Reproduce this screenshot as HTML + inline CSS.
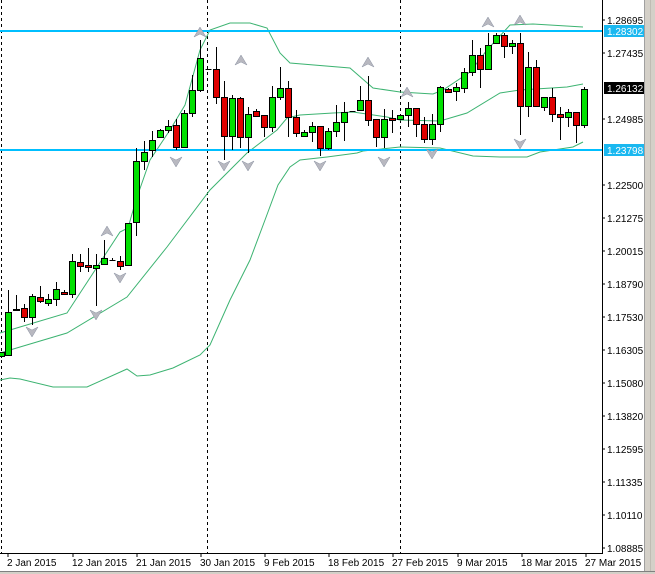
<!DOCTYPE html>
<html><head><style>
html,body{margin:0;padding:0;background:#fff;}
svg{display:block;font-family:"Liberation Sans",sans-serif;}
</style></head><body>
<svg width="655" height="574" viewBox="0 0 655 574" xmlns="http://www.w3.org/2000/svg">
<rect width="655" height="574" fill="#fff"/>
<!-- right strip -->
<rect x="644" y="0" width="11" height="574" fill="#d4d0c8"/>
<line x1="644.5" y1="0" x2="644.5" y2="574" stroke="#a0a0a0"/>
<line x1="650.5" y1="0" x2="650.5" y2="574" stroke="#c0bcb4"/>
<rect x="0" y="571" width="655" height="3" fill="#d4d0c8"/>
<line x1="0" y1="571.5" x2="655" y2="571.5" stroke="#808080"/>
<!-- dashed verticals -->
<g stroke="#000" stroke-dasharray="3,3" stroke-width="1">
<line x1="1.5" y1="0" x2="1.5" y2="553"/>
<line x1="207.5" y1="0" x2="207.5" y2="553"/>
<line x1="400.5" y1="0" x2="400.5" y2="553"/>
</g>
<!-- bands -->
<g fill="none" stroke="#3cb371" stroke-width="1">
<polyline points="0,333 20,327 67,313 120,232 128,228 136,200 150,160 170,130 185,105 200,50 210,30 230,23 250,23 267,28 280,53 290,63 350,68 373,88 400,92 433,94 443,90 470,72 487,50 510,25 533,24 583,27"/>
<polyline points="0,353 20,347 67,333 127,297 167,247 210,190 233,167 247,153 277,130 287,118 300,115 333,113 353,112 387,117 400,120 440,121 467,113 500,93 520,90 567,87 583,84"/>
<polyline points="0,380 10,378 20,379 53,387 87,387 127,369 137,376 150,375 173,368 200,355 210,345 230,300 250,260 265,220 278,185 290,167 300,160 327,157 357,153 363,151 400,147 440,148 473,156 500,157 527,157 540,152 573,147 583,142"/>
</g>
<!-- horizontal lines -->
<line x1="0" y1="31" x2="602" y2="31" stroke="#00bfff" stroke-width="2"/>
<line x1="0" y1="150" x2="602" y2="150" stroke="#00bfff" stroke-width="2"/>
<!-- candles -->
<g id="c" stroke="#000" stroke-width="1"></g>
<!-- fractals -->
<g fill="#b8b8c0" stroke="#8890a0" stroke-width="0.5">
<path d="M101,236 L107,226 L113,236 L107,233 Z"/>
<path d="M194,37 L200,27 L206,37 L200,34 Z"/>
<path d="M235,65 L241,55 L247,65 L241,62 Z"/>
<path d="M362,67 L368,57 L374,67 L368,64 Z"/>
<path d="M401,97 L407,87 L413,97 L407,94 Z"/>
<path d="M482,27 L488,17 L494,27 L488,24 Z"/>
<path d="M514,25 L520,15 L526,25 L520,22 Z"/>
<path d="M26,327 L32,330 L38,327 L32,337 Z"/>
<path d="M90,310 L96,313 L102,310 L96,320 Z"/>
<path d="M114,273 L120,276 L126,273 L120,283 Z"/>
<path d="M170,157 L176,160 L182,157 L176,167 Z"/>
<path d="M218,161 L224,164 L230,161 L224,171 Z"/>
<path d="M242,161 L248,164 L254,161 L248,171 Z"/>
<path d="M314,161 L320,164 L326,161 L320,171 Z"/>
<path d="M378,157 L384,160 L390,157 L384,167 Z"/>
<path d="M426,149 L432,152 L438,149 L432,159 Z"/>
<path d="M514,139 L520,142 L526,139 L520,149 Z"/>
</g>
<!-- axis -->
<line x1="602.5" y1="0" x2="602.5" y2="553" stroke="#000"/>
<line x1="0" y1="553.5" x2="603" y2="553.5" stroke="#000"/>
<g font-size="10" fill="#000">
<text x="607" y="24">1.28695</text>
<text x="607" y="57">1.27435</text>
<text x="607" y="123">1.24985</text>
<text x="607" y="189">1.22500</text>
<text x="607" y="222">1.21275</text>
<text x="607" y="255">1.20015</text>
<text x="607" y="288">1.18790</text>
<text x="607" y="321">1.17530</text>
<text x="607" y="354">1.16305</text>
<text x="607" y="387">1.15080</text>
<text x="607" y="420">1.13820</text>
<text x="607" y="453">1.12595</text>
<text x="607" y="486">1.11335</text>
<text x="607" y="519">1.10110</text>
<text x="607" y="552">1.08885</text>
</g>
<rect x="604" y="25" width="40" height="12" fill="#1ab8f0"/>
<text x="607" y="35" font-size="10" fill="#fff">1.28302</text>
<rect x="604" y="144" width="40" height="12" fill="#1ab8f0"/>
<text x="607" y="154" font-size="10" fill="#fff">1.23798</text>
<rect x="604" y="82" width="40" height="12" fill="#000"/>
<text x="607" y="92" font-size="10" fill="#fff">1.26132</text>
<g stroke="#000">
<line x1="602" y1="20" x2="605" y2="20"/><line x1="602" y1="53" x2="605" y2="53"/><line x1="602" y1="119" x2="605" y2="119"/><line x1="602" y1="185" x2="605" y2="185"/><line x1="602" y1="218" x2="605" y2="218"/><line x1="602" y1="251" x2="605" y2="251"/><line x1="602" y1="284" x2="605" y2="284"/><line x1="602" y1="317" x2="605" y2="317"/><line x1="602" y1="350" x2="605" y2="350"/><line x1="602" y1="383" x2="605" y2="383"/><line x1="602" y1="416" x2="605" y2="416"/><line x1="602" y1="449" x2="605" y2="449"/><line x1="602" y1="482" x2="605" y2="482"/><line x1="602" y1="515" x2="605" y2="515"/><line x1="602" y1="548" x2="605" y2="548"/>
<line x1="8" y1="553" x2="8" y2="557"/><line x1="73" y1="553" x2="73" y2="557"/><line x1="137" y1="553" x2="137" y2="557"/><line x1="201" y1="553" x2="201" y2="557"/><line x1="265" y1="553" x2="265" y2="557"/><line x1="329" y1="553" x2="329" y2="557"/><line x1="393" y1="553" x2="393" y2="557"/><line x1="458" y1="553" x2="458" y2="557"/><line x1="522" y1="553" x2="522" y2="557"/><line x1="586" y1="553" x2="586" y2="557"/>
</g>
<g font-size="10" fill="#000">
<text x="7" y="566">2 Jan 2015</text>
<text x="72" y="566">12 Jan 2015</text>
<text x="136" y="566">21 Jan 2015</text>
<text x="200" y="566">30 Jan 2015</text>
<text x="264" y="566">9 Feb 2015</text>
<text x="328" y="566">18 Feb 2015</text>
<text x="392" y="566">27 Feb 2015</text>
<text x="457" y="566">9 Mar 2015</text>
<text x="521" y="566">18 Mar 2015</text>
<text x="585" y="566">27 Mar 2015</text>
</g>
</svg>
<script>
// x, high, top(open/close), bottom, low, up?
var d=[
[1,352,352,356,358,1],
[8,290,312,355,356,1],[16,295,309,310,311,0],[24,304,308,317,322,0],[32,294,296,317,325,1],[40,286,297,301,303,0],
[48,294,299,303,306,1],[56,282,289,299,306,1],[64,290,292,294,295,0],[72,254,261,294,298,1],[80,254,262,266,272,0],
[88,248,265,267,272,0],[96,254,265,268,306,1],[104,240,258,264,264,1],[112,258,260,260,261,0],[120,256,261,266,270,0],
[128,223,223,265,266,1],[136,148,161,222,236,1],[144,141,152,161,170,1],[152,131,140,150,157,1],[160,129,130,137,138,1],
[168,120,126,130,133,1],[176,119,125,147,150,0],[184,110,113,147,148,1],[192,75,90,113,117,1],[200,40,58,90,92,1],
[208,69,69,69,69,0],[216,47,69,97,104,0],[224,81,97,136,160,0],[232,95,98,136,150,1],[240,97,98,137,148,0],
[248,107,114,137,153,1],[256,109,111,116,117,0],[264,115,115,127,137,0],[272,86,97,127,132,1],[280,67,88,97,100,1],
[288,81,88,117,137,0],[296,110,117,133,137,0],[304,130,132,136,137,1],[312,122,126,132,142,1],[320,126,126,148,156,0],
[328,128,131,148,150,1],[336,105,122,131,137,1],[344,102,112,122,141,1],[352,111,111,111,111,0],[360,86,100,110,110,1],
[368,76,100,120,126,0],[376,119,119,137,147,0],[384,109,119,137,148,1],[392,110,118,120,133,0],[400,115,115,119,120,1],
[408,102,108,115,127,1],[416,108,108,124,137,0],[424,117,124,139,143,0],[432,114,124,139,145,1],[440,86,87,124,132,1],
[448,88,89,92,93,0],[456,83,87,91,101,1],[464,68,72,88,93,1],[472,40,55,72,76,1],[480,48,55,69,88,0],
[488,33,45,69,70,1],[496,33,35,43,44,1],[504,33,35,46,58,0],[512,40,43,46,54,1],[520,33,43,106,135,0],
[528,52,67,106,117,1],[536,60,67,106,107,0],[544,97,97,107,111,1],[552,88,97,114,122,0],[560,107,114,117,140,0],
[568,109,112,117,127,1],[576,112,112,125,143,0],[584,87,89,125,128,1]];
var g=document.getElementById('c'),s='';
d.forEach(function(c){var x=c[0]+0.5;
s+='<line x1="'+x+'" y1="'+c[1]+'" x2="'+x+'" y2="'+c[4]+'"/>';
if(c[3]-c[2]<1){s+='<line x1="'+(x-3)+'" y1="'+(c[2]+0.5)+'" x2="'+(x+3)+'" y2="'+(c[2]+0.5)+'"/>';}
else s+='<rect x="'+(c[0]-2.5)+'" y="'+(c[2]+0.5)+'" width="6" height="'+(c[3]-c[2])+'" fill="'+(c[5]?'#00e000':'#e00000')+'"/>';});
g.innerHTML=s;
</script>
</body></html>
